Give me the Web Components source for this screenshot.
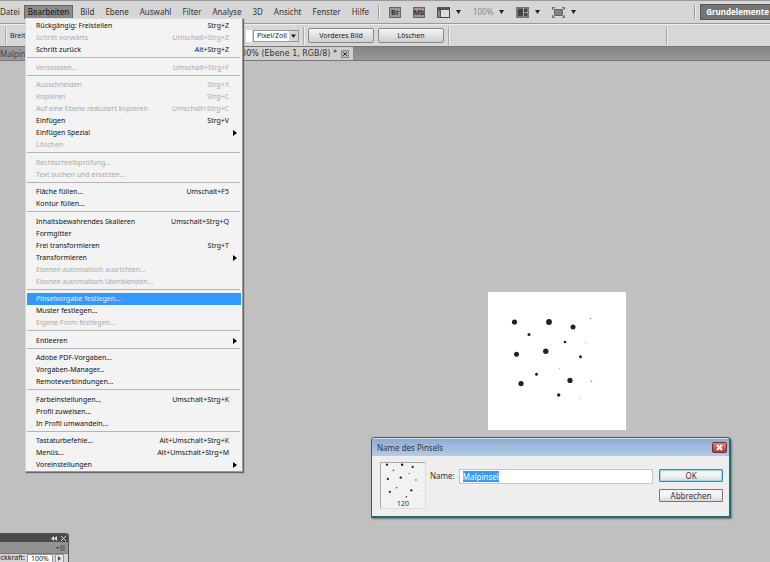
<!DOCTYPE html>
<html lang="de">
<head>
<meta charset="utf-8">
<title>Name des Pinsels</title>
<style>
html,body{margin:0;height:100%}
body{font:8px/12px "Noto Sans","DejaVu Sans",sans-serif;color:#222;background:#c0c0c0;overflow:hidden}
</style>
</head>
<body>
<photo-app></photo-app>
<script>
const define=(name,html,setup)=>customElements.define(name,class extends HTMLElement{
  connectedCallback(){
    if(this.shadowRoot)return;
    const t=document.createElement('template');
    t.innerHTML=html;
    this.attachShadow({mode:'open'}).append(t.content.cloneNode(true));
    if(setup)setup.call(this,this.shadowRoot);
  }
});
const reset=':host,*{box-sizing:border-box}button,input,select{font:inherit;color:inherit;margin:0;padding:0;border:0;background:none;border-radius:0}';

define('menu-entry',`<style>${reset}
:host{display:block}
button{display:flex;justify-content:space-between;align-items:center;width:100%;height:12px;padding:0 12px 0 9px;line-height:12px;color:#111;text-align:left;white-space:nowrap}
:host([disabled]) button{color:#aaa}
:host([active]) button{background:#3399ff;color:#e6f2ff}
svg{width:4px;height:6px;margin-right:-8px}
</style><button type="button" role="menuitem"><span><slot></slot></span><span class="key"></span></button>`,function(r){
  const k=r.querySelector('.key'),b=r.querySelector('button');
  b.disabled=this.hasAttribute('disabled');
  if(this.hasAttribute('submenu')){k.remove();b.insertAdjacentHTML('beforeend','<svg viewBox="0 0 4 6"><path d="M0 0L4 3L0 6Z"/></svg>');}
  else k.textContent=this.getAttribute('key')||'';
});

define('edit-menu',`<style>
:host{display:block;width:218px;box-sizing:border-box;padding:1px 1px 0;background:#f3f3f3;border:1px solid #999;border-top-color:#ddd;border-left-color:#d8d8d8;box-shadow:1px 1px 1px #666;font-size:7px}
hr{height:1px;border:0;margin:1px 1px 4px 0;background:#b4b4b4}
hr:nth-of-type(even){margin-bottom:3px}
</style><div role="menu" aria-label="Bearbeiten">
<menu-entry key="Strg+Z">Rückgängig: Freistellen</menu-entry>
<menu-entry disabled key="Umschalt+Strg+Z">Schritt vorwärts</menu-entry>
<menu-entry key="Alt+Strg+Z">Schritt zurück</menu-entry><hr>
<menu-entry disabled key="Umschalt+Strg+F">Verblassen...</menu-entry><hr>
<menu-entry disabled key="Strg+X">Ausschneiden</menu-entry>
<menu-entry disabled key="Strg+C">Kopieren</menu-entry>
<menu-entry disabled key="Umschalt+Strg+C">Auf eine Ebene reduziert kopieren</menu-entry>
<menu-entry key="Strg+V">Einfügen</menu-entry>
<menu-entry submenu>Einfügen Spezial</menu-entry>
<menu-entry disabled>Löschen</menu-entry><hr>
<menu-entry disabled>Rechtschreibprüfung...</menu-entry>
<menu-entry disabled>Text suchen und ersetzen...</menu-entry><hr>
<menu-entry key="Umschalt+F5">Fläche füllen...</menu-entry>
<menu-entry>Kontur füllen...</menu-entry><hr>
<menu-entry key="Umschalt+Strg+Q">Inhaltsbewahrendes Skalieren</menu-entry>
<menu-entry>Formgitter</menu-entry>
<menu-entry key="Strg+T">Frei transformieren</menu-entry>
<menu-entry submenu>Transformieren</menu-entry>
<menu-entry disabled>Ebenen automatisch ausrichten...</menu-entry>
<menu-entry disabled>Ebenen automatisch überblenden...</menu-entry><hr>
<menu-entry active>Pinselvorgabe festlegen...</menu-entry>
<menu-entry>Muster festlegen...</menu-entry>
<menu-entry disabled>Eigene Form festlegen...</menu-entry><hr>
<menu-entry submenu>Entleeren</menu-entry><hr>
<menu-entry>Adobe PDF-Vorgaben...</menu-entry>
<menu-entry>Vorgaben-Manager...</menu-entry>
<menu-entry>Remoteverbindungen...</menu-entry><hr>
<menu-entry key="Umschalt+Strg+K">Farbeinstellungen...</menu-entry>
<menu-entry>Profil zuweisen...</menu-entry>
<menu-entry>In Profil umwandeln...</menu-entry><hr>
<menu-entry key="Alt+Umschalt+Strg+K">Tastaturbefehle...</menu-entry>
<menu-entry key="Alt+Umschalt+Strg+M">Menüs...</menu-entry>
<menu-entry submenu>Voreinstellungen</menu-entry>
</div>`);

const arrow='<svg width="5" height="4"><path d="M0 0H5L2.5 4Z" fill="#222"/></svg>';
define('menu-bar',`<style>${reset}
:host{display:flex;align-items:center;height:24px;background:#d6d6d6;border-top:1px solid #999;border-bottom:1px solid #999;white-space:nowrap;color:#333;overflow:hidden}
nav{display:flex;align-items:center;flex:none}
nav button{height:14px;padding:0 5px 0 6px;line-height:12px}
nav button:first-child{padding:0 4px 0 0}
nav button.open{padding:0 3px;margin-right:1px;border:1px solid #666;background:#8c8c8c;color:#111}
i{flex:none;width:1px;height:14px;background:#999;box-shadow:1px 0 #eee}
nav+i{margin-left:4px}
.tools{display:flex;align-items:center;flex:1;padding-left:10px;gap:12px}
.tools button{display:flex;align-items:center;gap:6px;color:#888}
svg{display:block}
.tools .app{width:12px;height:11px;border:1px solid #666;background:#999;justify-content:center;color:#333;font-weight:bold;font-size:7px;line-height:9px}
.work{flex:none;height:16px;margin-left:5px;padding:0 1px 0 5px;border:1px solid #555;border-right:0;background:#747474;color:#fff;font-weight:bold;line-height:14px}
</style>
<nav><button>Datei</button><button class="open" aria-expanded="true">Bearbeiten</button><button>Bild</button><button>Ebene</button><button>Auswahl</button><button>Filter</button><button>Analyse</button><button>3D</button><button>Ansicht</button><button>Fenster</button><button>Hilfe</button></nav>
<i></i>
<div class="tools">
<button class="app">Br</button><button class="app">Mb</button>
<button aria-label="Extras"><svg width="13" height="11"><rect x=".5" y=".5" width="12" height="10" fill="#ddd" stroke="#444"/><path d="M0 0H13V3H0ZM0 3H4V11H0Z" fill="#555"/><path d="M1 5H3M1 7H3M1 9H3" stroke="#bbb"/></svg>${arrow}</button>
<button>100%${arrow}</button>
<button aria-label="Anordnen"><svg width="13" height="11"><rect width="13" height="11" fill="#777"/><path d="M2 2H7V9H2Z" fill="#444"/><path d="M8 2H11V5H8ZM8 6H11V9H8Z" fill="#444"/><path d="M7.5 1V10M8 5.500H12" stroke="#aaa"/></svg>${arrow}</button>
<button aria-label="Bildschirmmodus"><svg width="13" height="11"><rect x="2.500" y="2.500" width="8" height="6" fill="#808080" stroke="#666"/><path d="M0.500 3V.5H3M10 .5H12.500V3M12.500 8V10.500H10M3 10.500H.5V8M0 0L3 3M13 0L10 3M0 11L3 8M13 11L10 8" fill="none" stroke="#777"/></svg>${arrow}</button>
</div>
<i></i><button class="work">Grundelemente</button>`);

define('options-bar',`<style>${reset}
:host{display:grid;grid-template-columns:246px 1fr;align-items:center;height:22px;background:#d7d7d7;border-top:1px solid #eee;font-size:7px;white-space:nowrap}
div{display:flex;align-items:center}
i{flex:none;width:1px;height:18px;background:#aaa;box-shadow:1px 0 #eee}
.size{padding-left:5px;gap:4px}
.size input{width:30px;height:10px;background:#fff}
.field{width:6px;height:12px;background:#fff}
.sel{position:relative;margin:0 4px 0 1px}
select{appearance:none;width:46px;height:12px;padding-left:3px;border:1px solid #999;background:#fff;font-size:7px;line-height:10px}
.sel svg{position:absolute;right:1px;top:1px;pointer-events:none}
button{width:66px;height:15px;border:1px solid #888;border-radius:2px;background:linear-gradient(#f5f5f5,#cecece);line-height:13px;color:#222;margin-left:4px}
button+button{margin-right:4px}
.end{margin-left:auto;margin-right:103px}
</style>
<div class="size"><i></i><label for="w">Breite:</label><input id="w"></div>
<div><input class="field" aria-label="Auflösung"><span class="sel"><select aria-label="Einheit"><option>Pixel/Zoll</option></select><svg width="9" height="10"><rect width="9" height="10" fill="#d5d5d5"/><path d="M2 3.500H7L4.500 7Z" fill="#222"/></svg></span><i></i>
<button>Vorderes Bild</button><button>Löschen</button><i></i><i class="end"></i></div>`);

define('document-tabs',`<style>${reset}
:host{display:flex;height:15px;background:linear-gradient(#858585,#969696);border-top:1px solid #777;border-bottom:1px solid #777;white-space:nowrap;line-height:13px}
div{display:flex;align-items:center;height:13px}
.back{width:200px;color:#444;background:#999;overflow:hidden}
.front{width:153px;justify-content:flex-end;gap:4px;padding-right:4px;background:#cfcfcf;color:#333;font-family:"DejaVu Sans",sans-serif}
button{width:8px;height:8px;border:1px solid #888;background:#bbb;display:grid;place-items:center}
</style><div class="back">Malpinsel</div><div class="front"><span>100% (Ebene 1, RGB/8) *</span><button aria-label="Schließen"><svg width="6" height="6"><path d="M1 1L5 5M5 1L1 5" stroke="#333"/></svg></button></div>`);

const dots=[[26.5,30,2.6],[61,30,2.9],[85,35,2.5],[102.500,26.500,.7],[41,42.500,1.5],[77,50,1.3],[97.500,50.300,.5],[57.800,59.300,2.7],[28.500,62.300,2.5],[92.500,64.700,1.5],[71.500,76.700,.5],[48.500,82.300,1.5],[33,91.600,2.6],[82,88.400,2.6],[103.500,89.300,.8],[70.700,103,1.7],[91.500,106,.5]];
define('brush-art',`<style>:host{display:block;background:#fff}svg{display:block;width:100%;height:100%}</style><svg aria-hidden="true"></svg>`,function(r){
  const s=r.querySelector('svg');
  s.setAttribute('viewBox',this.getAttribute('view'));
  s.innerHTML=dots.map(d=>`<circle cx="${d[0]}" cy="${d[1]}" r="${d[2]}" fill="${d[2]<1?'#888':'#222'}"/>`).join('');
});

define('brush-dialog',`<style>${reset}
:host{display:block;border:1px solid #236a70;border-width:1px 2px 2px 1px;border-radius:4px 4px 0 0;background:#eee;box-shadow:1px 1px 2px #777;color:#333;overflow:hidden}
header{display:flex;align-items:center;justify-content:space-between;height:18px;padding:0 2px 0 5px;background:linear-gradient(#8fabd0,#b3cce9);border-top:1px solid #d5e4f4}
h1{margin:0;font-size:8px;line-height:14px;font-weight:normal;color:#333}
header button{width:15px;height:11px;border:1px solid #7c2a33;border-radius:2px;background:linear-gradient(#d28a88,#a93c3c);display:grid;place-items:center}
form{display:grid;grid-template-columns:46px auto 1fr 64px;align-items:start;gap:4px;padding:6px 8px 7px}
.thumb{width:46px;height:47px;border:1px solid #aaa;border-right-color:#ddd;border-bottom-color:#ddd;background:#f2f2f2;text-align:center;font-size:7px;line-height:9px}
brush-art{height:36px;background:none}
label{line-height:12px;margin-top:8px}
input{width:100%;height:15px;margin-top:7px;padding:0 3px;border:1px solid #c5c5c5;background:#fff}
input::selection{background:#3399ff;color:#fff}
.btns{display:grid;gap:7px;margin:7px 0 0 2px}
.btns button{width:64px;height:13px;border:1px solid #777;border-radius:1px;background:linear-gradient(#f4f4f4 50%,#d8d8d8);line-height:11px}
.btns .ok{border-color:#348db0;box-shadow:inset 0 0 0 1px #9bd8ef}
</style>
<section role="dialog" aria-labelledby="t"><header><h1 id="t">Name des Pinsels</h1><button aria-label="Schließen"><svg width="9" height="7"><path d="M2 1L7 6M7 1L2 6" stroke="#fff" stroke-width="2"/></svg></button></header>
<form><div class="thumb"><brush-art view="20 26 86 82"></brush-art>120</div><label for="n">Name:</label><input id="n" value="Malpinsel"><div class="btns"><button type="button" class="ok">OK</button><button type="button">Abbrechen</button></div></form></section>`,function(r){
  const n=r.querySelector('input');n.focus({preventScroll:true});n.select();n.style.outline='none';n.style.caretColor='transparent';
});

define('tool-panel',`<style>${reset}
:host{display:block;border:1px solid #555;border-left:0;border-bottom:0;border-radius:0 3px 0 0;background:#d4d4d4;overflow:hidden}
div{display:flex;align-items:center;justify-content:flex-end}
.cap{height:8px;padding-right:2px;gap:4px;background:#4b4b4b}
.tab{height:12px;padding-right:3px;background:#939393;border-bottom:1px solid #777}
.row{height:8px;white-space:nowrap;gap:2px;line-height:8px;font-size:7px;padding-right:4px}
.row label{flex:none}
input{flex:none;width:26px;height:8px;padding-left:3px;background:#fff;border:1px solid #999;border-bottom:0}
.row button{flex:none;width:9px;height:8px;border:1px solid #999;border-bottom:0;background:#e5e5e5;display:grid;place-items:center}
</style>
<div class="cap"><svg width="6" height="5"><path d="M3 0V5L0 2.500ZM6 0V5L3 2.500Z" fill="#ddd"/></svg><svg width="5" height="5"><path d="M0 0L5 5M5 0L0 5" stroke="#ddd"/></svg></div>
<div class="tab"><svg width="9" height="6"><path d="M0 2H3L1.500 4Z" fill="#333"/><path d="M4 1H9M4 3H9M4 5H9" stroke="#555"/></svg></div>
<div class="row"><label for="o">Deckkraft:</label><input id="o" value="100%"><button aria-label="Wert"><svg width="3" height="5"><path d="M0 0L3 2.500L0 5Z" fill="#446"/></svg></button></div>`);

define('photo-app',`<style>
:host{display:flex;flex-direction:column;height:100vh;position:relative;overflow:hidden}
main{flex:1;position:relative;background:#c0c0c0}
edit-menu{position:absolute;left:25px;top:18px;z-index:3}
.canvas{position:absolute;left:488px;top:231px;width:138px;height:138px}
brush-dialog{position:absolute;left:371px;top:376px;width:360px}
tool-panel{position:absolute;left:0;bottom:0;width:69px}
</style><menu-bar></menu-bar><options-bar></options-bar><document-tabs></document-tabs>
<main><brush-art class="canvas" view="0 0 138 138"></brush-art><brush-dialog></brush-dialog><tool-panel></tool-panel></main><edit-menu></edit-menu>`);
</script>
</body>
</html>
